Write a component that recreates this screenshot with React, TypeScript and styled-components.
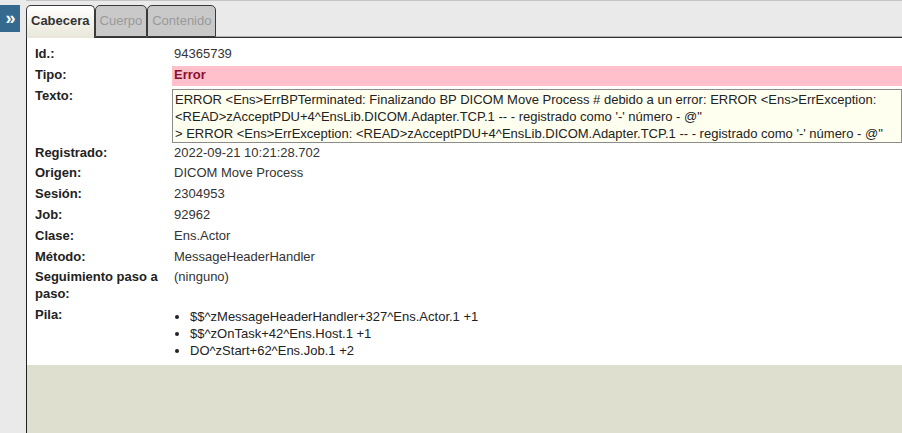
import React from 'react'
import styled, { createGlobalStyle } from 'styled-components'

const GlobalStyle = createGlobalStyle`
  html, body {
    margin: 0;
    padding: 0;
    height: 100%;
  }
  body {
    font-family: 'Liberation Sans', Arial, sans-serif;
    font-size: 13px;
    color: #222;
    background: #eaeaea;
  }
  #root {
    height: 100%;
  }
`

const Page = styled.div`
  display: flex;
  height: 100vh;
  overflow: hidden;
`

const Sidebar = styled.div`
  width: 26px;
  flex: none;
  background: #eaeaea;
  padding-top: 5px;
`

const ExpandButton = styled.button`
  width: 20px;
  height: 27px;
  border: none;
  padding: 0 0 2px 1px;
  background: #356a8e;
  color: #fff;
  font-family: 'Liberation Sans', Arial, sans-serif;
  font-size: 18px;
  font-weight: bold;
  line-height: 1;
  cursor: pointer;
`

const Main = styled.div`
  flex: 1;
  display: flex;
  flex-direction: column;
  min-width: 0;
`

const TabBar = styled.div`
  height: 38px;
  flex: none;
  display: flex;
  align-items: flex-end;
  box-sizing: border-box;
  background: #eaeaea;
  border-top: 1px solid #c4c4c4;
  border-bottom: 1px solid #333;
  box-shadow: inset 0 -1px 0 #b0b0b0;
`

const Tab = styled.div<{ $active?: boolean }>`
  box-sizing: border-box;
  padding: 6px 4px 0 4px;
  margin-bottom: ${(p) => (p.$active ? '-1px' : '0')};
  height: ${(p) => (p.$active ? '33px' : '32px')};
  border: 1px solid #3a3a3a;
  border-bottom: ${(p) => (p.$active ? 'none' : '1px solid #3a3a3a')};
  border-radius: 5px 5px 0 0;
  background: ${(p) =>
    p.$active ? 'linear-gradient(#ffffff, #e9e7d9)' : '#c9c9c9'};
  color: ${(p) => (p.$active ? '#333' : '#999')};
  font-weight: ${(p) => (p.$active ? 'bold' : 'normal')};
  font-size: 13px;
  line-height: 17px;
  cursor: pointer;
`

const Body = styled.div`
  flex: 1;
  display: flex;
  flex-direction: column;
  border-left: 1px solid #222;
`

const Details = styled.div`
  background: #fff;
  padding: 6px 0 6px 8px;
`

const Row = styled.div`
  display: grid;
  grid-template-columns: 137px 1fr;
`

const Label = styled.div`
  font-weight: bold;
  color: #222;
  line-height: 16.8px;
  padding: 2px 0;
`

const Value = styled.div`
  color: #333;
  line-height: 16.8px;
  padding: 2px 2px;
`

const ErrorValue = styled(Value)`
  background: #ffc0cb;
  color: #8a1030;
  font-weight: bold;
  margin: 1px 0 0;
  padding: 1px 2px 2px;
`

const TextBox = styled.div`
  margin: 3px 0 0;
  border: 1px solid #8c8c8c;
  background: #fffff0;
  color: #222;
  line-height: 17px;
  padding: 1px 2px 0;
`

const Stack = styled.ul`
  margin: 0;
  padding: 3px 0 0 18px;
  list-style: disc;
  color: #222;
  line-height: 17px;
`

const Filler = styled.div`
  flex: 1;
  background: #dfdfd0;
`

const rows: [string, string][] = [
  ['Registrado:', '2022-09-21 10:21:28.702'],
  ['Origen:', 'DICOM Move Process'],
  ['Sesión:', '2304953'],
  ['Job:', '92962'],
  ['Clase:', 'Ens.Actor'],
  ['Método:', 'MessageHeaderHandler'],
  ['Seguimiento paso a paso:', '(ninguno)'],
]

const stack = [
  '$$^zMessageHeaderHandler+327^Ens.Actor.1 +1',
  '$$^zOnTask+42^Ens.Host.1 +1',
  'DO^zStart+62^Ens.Job.1 +2',
]

const App: React.FC = () => {
  return (
    <Page>
      <GlobalStyle />
      <Sidebar>
        <ExpandButton>»</ExpandButton>
      </Sidebar>
      <Main>
        <TabBar>
          <Tab $active>Cabecera</Tab>
          <Tab>Cuerpo</Tab>
          <Tab>Contenido</Tab>
        </TabBar>
        <Body>
          <Details>
            <Row>
              <Label>Id.:</Label>
              <Value>94365739</Value>
            </Row>
            <Row>
              <Label>Tipo:</Label>
              <ErrorValue>Error</ErrorValue>
            </Row>
            <Row>
              <Label>Texto:</Label>
              <TextBox>
                ERROR &lt;Ens&gt;ErrBPTerminated: Finalizando BP DICOM Move Process # debido a un error: ERROR &lt;Ens&gt;ErrException:
                <br />
                &lt;READ&gt;zAcceptPDU+4^EnsLib.DICOM.Adapter.TCP.1 -- - registrado como '-' número - @"
                <br />
                &gt; ERROR &lt;Ens&gt;ErrException: &lt;READ&gt;zAcceptPDU+4^EnsLib.DICOM.Adapter.TCP.1 -- - registrado como '-' número - @"
              </TextBox>
            </Row>
            {rows.map(([label, value]) => (
              <Row key={label}>
                <Label>{label}</Label>
                <Value>{value}</Value>
              </Row>
            ))}
            <Row>
              <Label>Pila:</Label>
              <Stack>
                {stack.map((s) => (
                  <li key={s}>{s}</li>
                ))}
              </Stack>
            </Row>
          </Details>
          <Filler />
        </Body>
      </Main>
    </Page>
  )
}

export default App
